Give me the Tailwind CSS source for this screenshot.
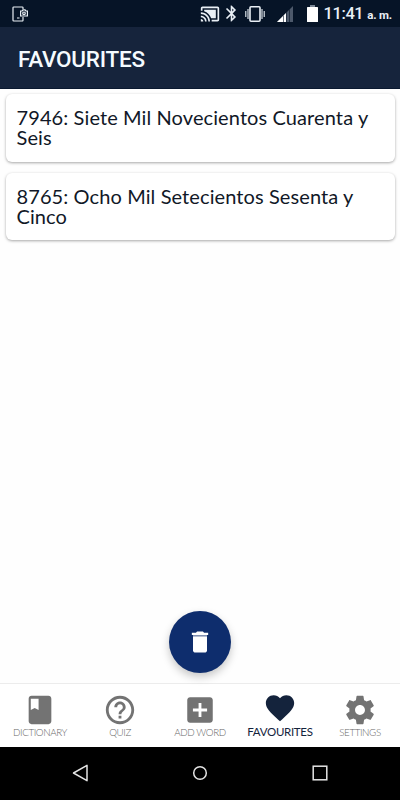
<!DOCTYPE html>
<html lang="en">
  <head>
    <meta charset="UTF-8" />
    <meta name="viewport" content="width=device-width, initial-scale=1.0" />
    <title>Favourites</title>
    <script src="https://cdn.jsdelivr.net/npm/@tailwindcss/browser@4"></script>
  </head>
  <body class="flex flex-col w-[400px] h-[800px] overflow-hidden bg-[#fefefe] font-[Lato,sans-serif]">
    <!-- Status bar -->
    <div class="flex items-center h-[27px] shrink-0 pl-3 pr-2 bg-[#061427] text-[#e9eff5]">
      <svg class="w-4 h-4" viewBox="0 0 16 16" fill="none" stroke="currentColor" stroke-width="1.2">
        <path d="M11 3V1.700a.7.7 0 0 0-.7-.7H1.700a.7.7 0 0 0-.7.7v12.600a.7.7 0 0 0 .7.7h8.600a.7.7 0 0 0 .7-.7V11M5 12h2.500" />
        <path d="M8.600 5h1.500l.8-1.200h2.200l.8 1.200h1.500v5H8.600z" />
        <circle cx="12" cy="7.300" r="1.300" />
      </svg>
      <svg class="w-[20px] h-[20px] ml-[172px]" viewBox="0 0 24 24" fill="currentColor">
        <path d="M1 18v3h3c0-1.660-1.340-3-3-3zm0-4v2c2.760 0 5 2.240 5 5h2c0-3.870-3.130-7-7-7zm18-7H5v1.630c3.960 1.280 7.090 4.410 8.370 8.370H19V7zM1 10v2c4.970 0 9 4.030 9 9h2c0-6.080-4.930-11-11-11zm20-7H3c-1.100 0-2 .9-2 2v3h2V5h18v14h-7v2h7c1.100 0 2-.9 2-2V5c0-1.100-.9-2-2-2z" />
      </svg>
      <svg class="w-[19px] h-[19px] ml-[2px]" viewBox="0 0 24 24" fill="currentColor">
        <path d="M17.710 7.710L12 2h-1v7.590L6.410 5 5 6.410 10.590 12 5 17.590 6.410 19 11 14.410V22h1l5.710-5.710-4.300-4.290 4.300-4.290zM13 5.830l1.880 1.880L13 9.590V5.830zm1.880 10.460L13 18.170v-3.760l1.880 1.880z" />
      </svg>
      <svg class="w-5 h-5 ml-[4px]" viewBox="0 0 20 20" fill="none" stroke="currentColor">
        <rect x="5" y="2.800" width="10" height="14.400" rx="1" stroke-width="1.600" />
        <path d="M3 5v10M17 5v10M.8 7v6M19.200 7v6" stroke-width="1.100" />
      </svg>
      <svg class="w-4 h-4 ml-[12px]" viewBox="0 0 16 16">
        <path d="M0 16L16 0V16z" fill="#4d596b" />
        <path d="M0 16L9 7V16z" fill="#ffffff" />
        <path d="M6.500 9.500V16M9.500 6.500V16M12.500 3.500V16" stroke="#061427" stroke-width=".6" />
      </svg>
      <svg class="w-[11px] h-[17px] ml-[14px]" viewBox="0 0 11 17">
        <rect x="3" width="5" height="2" fill="#7b8796" />
        <rect y="2" width="11" height="15" rx=".5" fill="#ffffff" />
      </svg>
      <p class="flex items-baseline ml-auto pt-[2px] font-[Roboto,sans-serif] font-medium whitespace-nowrap">
        <span class="text-[16.500px] tracking-[-0.400px]">11:41</span>
        <span class="ml-1 text-[11.500px] font-bold tracking-[-0.200px]">a. m.</span>
      </p>
    </div>

    <!-- Header -->
    <header class="flex items-center h-[62px] shrink-0 px-[18px] pt-1 bg-[#16243c] border-b border-[#0a1930]">
      <h1 class="font-[Roboto,sans-serif] text-[22.500px] font-medium text-[#f5fbff] tracking-[-0.250px]">FAVOURITES</h1>
    </header>

    <!-- Saved words -->
    <main class="relative flex flex-col flex-1 gap-[11px] px-[5.500px] pt-[5px]">
      <div class="h-[67.500px] pl-[11px] pr-2 pt-[13px] bg-white rounded-[6px] shadow-[0_1px_3px_rgba(0,0,0,0.35)] text-[20px] leading-[20px] tracking-[0.1px] text-[#111827]">
        <p>7946: Siete Mil Novecientos Cuarenta y Seis</p>
      </div>
      <div class="h-[67.500px] pl-[11px] pr-2 pt-[13px] bg-white rounded-[6px] shadow-[0_1px_3px_rgba(0,0,0,0.35)] text-[20px] leading-[20px] tracking-[0.1px] text-[#111827]">
        <p>8765: Ocho Mil Setecientos Sesenta y Cinco</p>
      </div>

      <!-- Delete button -->
      <button class="absolute bottom-[10px] left-[169px] flex items-center justify-center w-[62px] h-[62px] rounded-full bg-[#0e2d6d] text-white shadow-[0_4px_8px_rgba(0,0,0,0.22)]">
        <svg class="w-[28px] h-[28px]" viewBox="0 0 24 24" fill="currentColor">
          <path d="M6 19c0 1.100.9 2 2 2h8c1.100 0 2-.9 2-2V7H6v12z" />
          <path d="M19 4h-3.500l-1-1h-5l-1 1H5v2h14V4z" />
          <path d="M6 6.500h12" stroke="#8190b1" stroke-width="1" />
        </svg>
      </button>
    </main>

    <!-- Tabs -->
    <nav class="grid grid-cols-5 h-[64px] shrink-0 bg-white border-t border-[#ececec] text-[#666666] text-[9.800px] leading-3 font-light tracking-[-0.400px] text-center whitespace-nowrap">
      <div class="flex flex-col items-center pt-[9px]">
        <svg class="w-[34px] h-[34px] text-[#737373]" viewBox="0 0 24 24" fill="currentColor">
          <path d="M18 2H6c-1.100 0-2 .9-2 2v16c0 1.100.9 2 2 2h12c1.100 0 2-.9 2-2V4c0-1.100-.9-2-2-2zM5.500 4h5.500v8l-2.750-1.500L5.500 12V4z" />
        </svg>
        <span class="-mt-px">DICTIONARY</span>
      </div>
      <div class="flex flex-col items-center pt-[9px]">
        <svg class="w-[34px] h-[34px] text-[#737373]" viewBox="0 0 24 24" fill="currentColor">
          <path d="M11 18h2v-2h-2v2zm1-16C6.480 2 2 6.480 2 12s4.480 10 10 10 10-4.480 10-10S17.520 2 12 2zm0 18c-4.410 0-8-3.590-8-8s3.590-8 8-8 8 3.590 8 8-3.590 8-8 8zm0-14c-2.210 0-4 1.790-4 4h2c0-1.100.9-2 2-2s2 .9 2 2c0 2-3 1.750-3 5h2c0-2.250 3-2.500 3-5 0-2.210-1.790-4-4-4z" />
        </svg>
        <span class="-mt-px">QUIZ</span>
      </div>
      <div class="flex flex-col items-center pt-[9px]">
        <svg class="w-[34px] h-[34px] text-[#737373]" viewBox="0 0 24 24" fill="currentColor">
          <path d="M19 3H5c-1.110 0-2 .9-2 2v14c0 1.100.89 2 2 2h14c1.100 0 2-.9 2-2V5c0-1.100-.9-2-2-2zm-2 10h-4v4h-2v-4H7v-2h4V7h2v4h4v2z" />
        </svg>
        <span class="-mt-px">ADD WORD</span>
      </div>
      <div class="flex flex-col items-center pt-[7px] text-[#14233c]">
        <svg class="w-[34px] h-[34px]" viewBox="0 0 24 24" fill="currentColor">
          <path d="M12 21.350l-1.450-1.320C5.400 15.360 2 12.280 2 8.500 2 5.420 4.420 3 7.500 3c1.740 0 3.410.81 4.500 2.090C13.090 3.810 14.760 3 16.500 3 19.580 3 22 5.420 22 8.500c0 3.780-3.400 6.860-8.550 11.540L12 21.350z" />
        </svg>
        <span class="mt-px text-[11.500px] font-normal tracking-[-0.300px]">FAVOURITES</span>
      </div>
      <div class="flex flex-col items-center pt-[9px]">
        <svg class="w-[34px] h-[34px] text-[#737373]" viewBox="0 0 24 24" fill="currentColor">
          <path d="M19.430 12.980c.04-.32.07-.64.07-.98s-.03-.66-.07-.98l2.110-1.650c.19-.15.24-.42.12-.64l-2-3.460c-.12-.22-.39-.3-.61-.22l-2.490 1c-.52-.4-1.080-.73-1.690-.98l-.38-2.650C14.460 2.180 14.250 2 14 2h-4c-.25 0-.46.18-.49.42l-.38 2.650c-.61.25-1.170.59-1.690.98l-2.490-1c-.23-.09-.49 0-.61.22l-2 3.460c-.13.22-.07.49.12.64l2.110 1.650c-.04.32-.07.65-.07.98s.03.66.07.98l-2.110 1.650c-.19.15-.24.42-.12.64l2 3.460c.12.22.39.3.61.22l2.490-1c.52.4 1.080.73 1.690.98l.38 2.650c.03.24.24.42.49.42h4c.25 0 .46-.18.49-.42l.38-2.650c.61-.25 1.170-.59 1.690-.98l2.490 1c.23.09.49 0 .61-.22l2-3.460c.12-.22.07-.49-.12-.64l-2.110-1.650zM12 15.500c-1.930 0-3.500-1.570-3.500-3.500s1.570-3.500 3.500-3.500 3.500 1.570 3.500 3.500-1.570 3.500-3.500 3.500z" />
        </svg>
        <span class="-mt-px">SETTINGS</span>
      </div>
    </nav>

    <!-- Android navigation -->
    <div class="flex items-center justify-around h-[53px] shrink-0 px-5 pb-[2px] bg-black text-[#e4e4e4]">
      <svg class="w-5 h-5" viewBox="0 0 20 20" fill="none" stroke="currentColor" stroke-width="1.500" stroke-linejoin="round">
        <path d="M3.500 10L17 2.300v15.400z" />
      </svg>
      <svg class="w-5 h-5" viewBox="0 0 20 20" fill="none" stroke="currentColor" stroke-width="1.500">
        <circle cx="10" cy="10" r="6.300" />
      </svg>
      <svg class="w-5 h-5" viewBox="0 0 20 20" fill="none" stroke="currentColor" stroke-width="1.500">
        <rect x="3.200" y="3.200" width="13.600" height="13.600" />
      </svg>
    </div>
  </body>
</html>
